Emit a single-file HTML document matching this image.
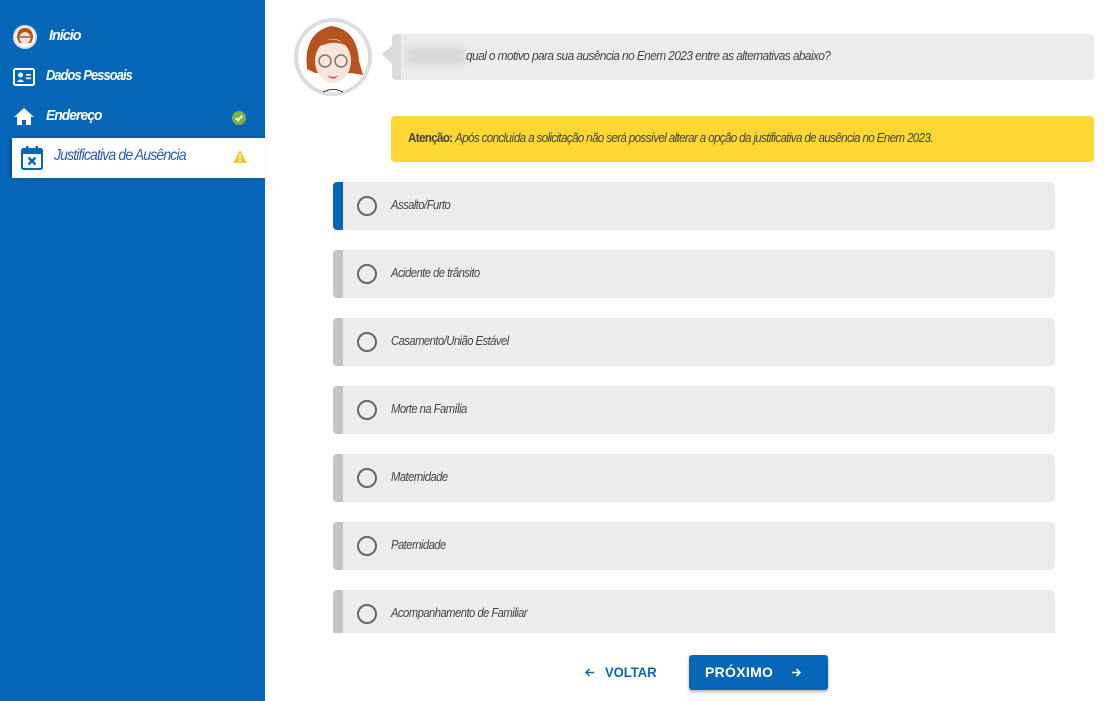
<!DOCTYPE html>
<html><head><meta charset="utf-8"><style>
*{margin:0;padding:0;box-sizing:border-box}
body{width:1106px;height:701px;overflow:hidden;background:#fff;font-family:"Liberation Sans",sans-serif;position:relative}
.side{position:absolute;left:0;top:0;width:265px;height:701px;background:#0766b8}
.nav{position:absolute;left:0;color:#fff;font-style:italic;font-weight:bold;font-size:15px;letter-spacing:-1px;}
.nav span{position:absolute;white-space:nowrap}
.act{position:absolute;left:12px;top:138px;width:253px;height:40px;background:#fff;box-shadow:-2px 0 3px rgba(0,0,0,.25)}
.cond{display:inline-block;transform:scaleX(.85);transform-origin:left center;white-space:nowrap}
.opt{position:absolute;left:333px;width:722px;height:48px;background:#ececec;border-left:10px solid #c4c4c4;border-radius:4px}
.opt .r{position:absolute;left:14px;top:14px;width:20px;height:20px;border:2px solid #666;border-radius:50%}
.opt .t{position:absolute;left:48px;top:16px;font-style:italic;font-size:12.5px;color:#444;letter-spacing:-.6px}
</style></head><body>
<div class="side"></div>
<svg style="position:absolute;left:12px;top:24px" width="26" height="26" viewBox="0 0 26 26"><circle cx="13" cy="13" r="12" fill="#ddd"/><circle cx="13" cy="13" r="10" fill="#fff"/><path d="M5 14 Q5 4 13 4 Q21 4 21 14 L19 19 L7 19Z" fill="#b5541c"/><ellipse cx="13" cy="14" rx="5.5" ry="6" fill="#f9ded3"/><rect x="8" y="12" width="10" height="2" fill="#888"/></svg>
<div class="nav" style="top:27px;left:49px"><span class="cond" style="transform:scaleX(.95)">Início</span></div>
<svg style="position:absolute;left:13px;top:68px" width="22" height="18" viewBox="0 0 22 18"><rect x="1" y="1" width="20" height="16" rx="1.5" fill="none" stroke="#fff" stroke-width="2"/><circle cx="7.5" cy="7" r="2.5" fill="#fff"/><path d="M4 14 Q7.5 9 11 14Z" fill="#fff"/><rect x="13" y="6" width="5" height="1.6" fill="#fff"/><rect x="13" y="9.5" width="5" height="1.6" fill="#fff"/></svg>
<div class="nav" style="top:67px;left:46px"><span class="cond">Dados Pessoais</span></div>
<svg style="position:absolute;left:13px;top:107px" width="22" height="18" viewBox="0 0 22 18"><path d="M11 1 L1 10 L3 10 L11 3 L19 10 L21 10Z" fill="#fff"/><path d="M4 9 L11 3 L18 9 L18 18 L13 18 L13 13 L9 13 L9 18 L4 18Z" fill="#fff"/></svg>
<div class="nav" style="top:107px;left:46px"><span class="cond" style="transform:scaleX(.92)">Endereço</span></div>
<svg style="position:absolute;left:232px;top:111px" width="14" height="14" viewBox="0 0 14 14"><circle cx="7" cy="7" r="7" fill="#7cb342"/><path d="M3.8 7.2 L6 9.3 L10.3 4.8" stroke="#fff" stroke-width="1.8" fill="none"/></svg>
<div class="act"></div>
<svg style="position:absolute;left:21px;top:145px" width="22" height="25" viewBox="0 0 22 25"><rect x="1" y="4" width="20" height="20" rx="1.5" fill="none" stroke="#0766b8" stroke-width="2"/><rect x="1" y="4" width="20" height="5" fill="#0766b8"/><rect x="5" y="1" width="2.5" height="5" fill="#0766b8"/><rect x="14.5" y="1" width="2.5" height="5" fill="#0766b8"/><path d="M7.5 12.5 L14.5 19.5 M14.5 12.5 L7.5 19.5" stroke="#0766b8" stroke-width="2.4"/></svg>
<div class="nav" style="top:147px;left:54px;color:#2a5db0;font-weight:normal;font-size:16px"><span class="cond" style="transform:scaleX(.88)">Justificativa de Ausência</span></div>
<svg style="position:absolute;left:233px;top:150px" width="14" height="13" viewBox="0 0 14 13"><path d="M7 0 L14 13 L0 13Z" fill="#f9c32b"/><rect x="6.2" y="4" width="1.6" height="5" fill="#fff"/><rect x="6.2" y="10" width="1.6" height="1.6" fill="#fff"/></svg>

<svg style="position:absolute;left:293px;top:17px" width="80" height="80" viewBox="0 0 80 80"><circle cx="40" cy="40" r="39" fill="#ddd"/><circle cx="40" cy="40" r="35" fill="#fff"/><path d="M14 52 Q10 16 38 9 Q64 12 66 44 L70 58 L58 56 L22 56 Z" fill="#b5541c"/><ellipse cx="40" cy="44" rx="18" ry="22" fill="#fbe4da"/><path d="M22 30 Q40 14 58 32 Q46 22 30 28Z" fill="#b5541c"/><circle cx="32" cy="44" r="6" fill="none" stroke="#777" stroke-width="1.5"/><circle cx="48" cy="44" r="6" fill="none" stroke="#777" stroke-width="1.5"/><path d="M34 58 Q40 62 46 58 Q40 65 34 58Z" fill="#c0394b"/><path d="M30 75 Q40 70 50 75" stroke="#333" fill="none"/></svg>
<svg style="position:absolute;left:382px;top:44px" width="12" height="24" viewBox="0 0 12 24"><path d="M12 0 L12 22 L0 10Z" fill="#dcdcdc"/></svg>
<div style="position:absolute;left:392px;top:34px;width:702px;height:46px;background:#ececec;border-left:9px solid #dcdcdc;border-radius:4px"></div>
<div style="position:absolute;left:406px;top:47px;width:60px;height:18px;background:#d8d8d8;filter:blur(3px)"></div>
<div style="position:absolute;left:466px;top:49px;font-style:italic;font-size:12.5px;color:#444;letter-spacing:-.6px"><span class="cond" style="transform:scaleX(.95)">qual o motivo para sua ausência no Enem 2023 entre as alternativas abaixo?</span></div>
<div style="position:absolute;left:391px;top:116px;width:703px;height:46px;background:#fdd835;border-radius:4px"></div>
<div style="position:absolute;left:408px;top:131px;font-size:12.5px;color:#444;letter-spacing:-.7px"><span class="cond" style="transform:scaleX(.93)"><b>Atenção:</b> <i>Após concluída a solicitação não será possível alterar a opção da justificativa de ausência no Enem 2023.</i></span></div>

<div style="position:absolute;left:0;top:0;width:1106px;height:633px;overflow:hidden">
<div class="opt" style="top:182px;border-left-color:#0766b8"><div class="r"></div><div class="t"><span class="cond" style="transform:scaleX(.9)">Assalto/Furto</span></div></div>
<div class="opt" style="top:250px"><div class="r"></div><div class="t"><span class="cond" style="transform:scaleX(.9)">Acidente de trânsito</span></div></div>
<div class="opt" style="top:318px"><div class="r"></div><div class="t"><span class="cond" style="transform:scaleX(.9)">Casamento/União Estável</span></div></div>
<div class="opt" style="top:386px"><div class="r"></div><div class="t"><span class="cond" style="transform:scaleX(.9)">Morte na Família</span></div></div>
<div class="opt" style="top:454px"><div class="r"></div><div class="t"><span class="cond" style="transform:scaleX(.9)">Maternidade</span></div></div>
<div class="opt" style="top:522px"><div class="r"></div><div class="t"><span class="cond" style="transform:scaleX(.9)">Paternidade</span></div></div>
<div class="opt" style="top:590px"><div class="r"></div><div class="t"><span class="cond" style="transform:scaleX(.9)">Acompanhamento de Familiar</span></div></div>
</div>

<svg style="position:absolute;left:584px;top:667px" width="11" height="11" viewBox="0 0 11 11"><path d="M10 5.5 H2 M5.5 2 L2 5.5 L5.5 9" stroke="#0766b8" stroke-width="1.5" fill="none"/></svg>
<div style="position:absolute;left:605px;top:664px;font-size:14px;font-weight:bold;color:#0766b8;letter-spacing:0"><span class="cond" style="transform:scaleX(.93)">VOLTAR</span></div>
<div style="position:absolute;left:689px;top:655px;width:139px;height:35px;background:#0766b8;border-radius:3px;box-shadow:0 2px 3px rgba(0,0,0,.3)"></div>
<div style="position:absolute;left:705px;top:664px;font-size:14px;font-weight:bold;color:#fff;letter-spacing:.3px">PRÓXIMO</div>
<svg style="position:absolute;left:791px;top:667px" width="11" height="11" viewBox="0 0 11 11"><path d="M1 5.5 H9 M5.5 2 L9 5.5 L5.5 9" stroke="#fff" stroke-width="1.5" fill="none"/></svg>
</body></html>
